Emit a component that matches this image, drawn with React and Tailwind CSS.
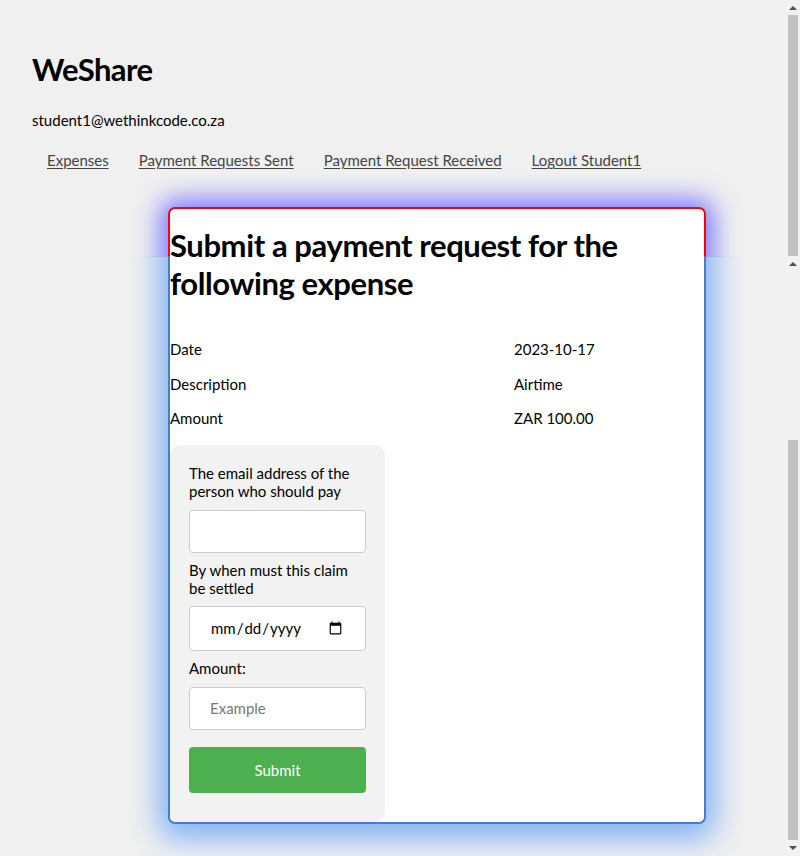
import React from "react";

function Arrow({ up }) {
  return up ? (
    <div className="w-0 h-0 border-l-[4px] border-r-[4px] border-b-[4px] border-l-transparent border-r-transparent border-b-[#505050]" />
  ) : (
    <div className="w-0 h-0 border-l-[4px] border-r-[4px] border-t-[4px] border-l-transparent border-r-transparent border-t-[#505050]" />
  );
}

function FakeScrollbar() {
  return (
    <div className="w-[15px] h-[856px] flex flex-col shrink-0 bg-[#f1f1f1]">
      <div className="h-[15px] flex items-center justify-center">
        <Arrow up />
      </div>
      <div className="h-[241px] flex justify-center">
        <div className="w-[10px] h-full bg-[#c1c1c1]" />
      </div>
      <div className="h-[16px] flex items-center justify-center">
        <Arrow up />
      </div>
      <div className="h-[168px]" />
      <div className="h-[400px] flex justify-center">
        <div className="w-[10px] h-full bg-[#c1c1c1]" />
      </div>
      <div className="h-[16px] flex items-center justify-center">
        <Arrow />
      </div>
    </div>
  );
}

export default function App() {
  const rows = [
    ["Date", "2023-10-17"],
    ["Description", "Airtime"],
    ["Amount", "ZAR 100.00"],
  ];
  return (
    <div className="flex w-[800px] h-[856px] overflow-hidden bg-[#f0f0f0] text-black font-['Lato','Open_Sans',sans-serif]">
      <main className="flex-1 pl-8 pt-[49px]">
        <h1 className="text-[31px] leading-[40px] font-bold tracking-[-0.6px]">WeShare</h1>
        <p className="mt-[21px] text-[15px] leading-[20px]">student1@wethinkcode.co.za</p>
        <nav className="mt-[20px] pl-[15px] flex gap-[30px] text-[15px] leading-[20px] text-[#444]">
          <a className="underline underline-offset-2">Expenses</a>
          <a className="underline underline-offset-2">Payment Requests Sent</a>
          <a className="underline underline-offset-2">Payment Request Received</a>
          <a className="underline underline-offset-2">Logout Student1</a>
        </nav>

        <section className="relative mt-[37px] ml-[136px] w-[538px] p-[2px]">
          {/* lower frame: blue border + glow */}
          <div className="absolute inset-0 rounded-[7px] border-2 border-[#4a7cc8] bg-white shadow-[0_6px_30px_9px_#80b2f4] [clip-path:inset(49px_-90px_-90px_-90px)]" />
          {/* upper frame: red border + purple glow */}
          <div className="absolute inset-0 rounded-[7px] border-2 border-[#ff0000] bg-white shadow-[0_0_26px_7px_#7474ff] [clip-path:inset(-90px_-90px_567px_-90px)]" />

          <div className="relative">
            <h2 className="pt-[17px] text-[31px] leading-[38px] font-bold tracking-[-0.4px]">
              Submit a payment request for the following expense
            </h2>
            <div className="mt-[30px] grid grid-cols-[344px_1fr] text-[15px]">
              {rows.map(([k, v]) => (
                <React.Fragment key={k}>
                  <div className="h-[34.5px] flex items-center">{k}</div>
                  <div className="h-[34.5px] flex items-center">{v}</div>
                </React.Fragment>
              ))}
            </div>
            <form className="mt-[9px] w-[215px] h-[377px] rounded-[10px] bg-[#f2f2f2] px-[19px] pt-[19px] text-[15px] leading-[18px]">
              <label className="block">The email address of the person who should pay</label>
              <input type="email" className="mt-[10px] block w-[177px] h-[43px] rounded-[4px] border border-[#cccccc] bg-white px-5" />
              <label className="mt-[8px] block">By when must this claim be settled</label>
              <input type="date" className="mt-[9px] block w-[177px] h-[45px] rounded-[4px] border border-[#cccccc] bg-white px-5 text-[15px]" />
              <label className="mt-[8px] block">Amount:</label>
              <input type="text" placeholder="Example" className="mt-[10px] block w-[177px] h-[43px] rounded-[4px] border border-[#cccccc] bg-white px-5 placeholder:text-[#777]" />
              <button type="button" className="mt-[17px] block w-[177px] h-[46px] rounded-[4px] bg-[#4caf50] text-white text-[15px]">
                Submit
              </button>
            </form>
          </div>
        </section>
      </main>
      <FakeScrollbar />
    </div>
  );
}
